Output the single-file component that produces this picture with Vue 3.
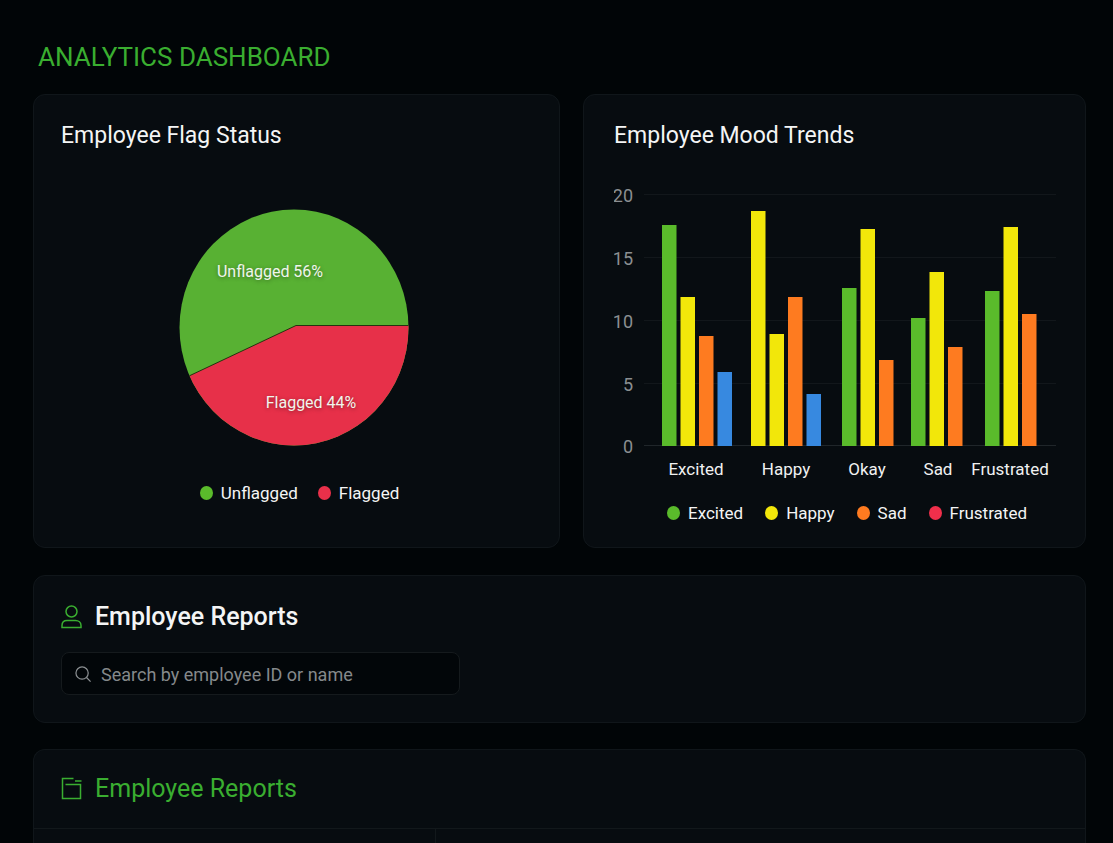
<script setup>
import { ref } from 'vue'

const query = ref('')

const GREEN = '#5abb2b'
const YELLOW = '#f2e70a'
const ORANGE = '#fe7b20'
const BLUE = '#3789e0'
const RED = '#e9304a'

const flagLegend = [
  { label: 'Unflagged', color: GREEN },
  { label: 'Flagged', color: RED },
]

const moodLegend = [
  { label: 'Excited', color: GREEN },
  { label: 'Happy', color: YELLOW },
  { label: 'Sad', color: ORANGE },
  { label: 'Frustrated', color: '#f02f4b' },
]

const baseline = 266
const ticks = [
  { value: 20, y: 15 },
  { value: 15, y: 78 },
  { value: 10, y: 141 },
  { value: 5, y: 204 },
  { value: 0, y: 266 },
]

const groups = [
  { label: 'Excited', x: 49, center: 83, bars: [[221, GREEN], [149, YELLOW], [110, ORANGE], [74, BLUE]] },
  { label: 'Happy', x: 138, center: 173, bars: [[235, YELLOW], [112, YELLOW], [149, ORANGE], [52, BLUE]] },
  { label: 'Okay', x: 229, center: 254, bars: [[158, GREEN], [217, YELLOW], [86, ORANGE]] },
  { label: 'Sad', x: 298, center: 325, bars: [[128, GREEN], [174, YELLOW], [99, ORANGE]] },
  { label: 'Frustrated', x: 372, center: 397, bars: [[155, GREEN], [219, YELLOW], [132, ORANGE]] },
]
const barStep = 18.5
</script>

<template>
  <main class="page">
    <h1 class="page-title">ANALYTICS DASHBOARD</h1>

    <div class="charts">
      <section class="card chart-card">
        <h2 class="card-title">Employee Flag Status</h2>
        <svg class="pie" viewBox="0 0 471 321" role="img" aria-label="Unflagged 56%, Flagged 44%">
          <clipPath id="pie-outline">
            <ellipse cx="233" cy="167.500" rx="114.500" ry="118" />
          </clipPath>
          <g clip-path="url(#pie-outline)">
            <rect x="110" y="40" width="250" height="250" fill="#58b133" />
            <path d="M235 165.500H360V300H110V224.500Z" fill="#e73049" />
            <path d="M360 165.500H235L110 224.500" fill="none" stroke="#26330f" stroke-width="1" />
          </g>
          <text class="slice-label" x="209" y="117">Unflagged 56%</text>
          <text class="slice-label" x="250" y="248">Flagged 44%</text>
        </svg>
        <ul class="legend flag-legend">
          <li v-for="item in flagLegend" :key="item.label">
            <span class="dot" :style="{ background: item.color }"></span>{{ item.label }}
          </li>
        </ul>
      </section>

      <section class="card chart-card mood-card">
        <h2 class="card-title">Employee Mood Trends</h2>
        <svg class="bars" viewBox="1 0 442 312" role="img" aria-label="Employee mood trends by category">
          <g v-for="tick in ticks" :key="tick.value">
            <rect x="31" :y="tick.y - 1" width="412" height="1" :fill="tick.value ? '#12171b' : '#20262a'" />
            <text class="tick-label" x="20" :y="tick.y + 7">{{ tick.value }}</text>
          </g>
          <g v-for="group in groups" :key="group.label">
            <rect
              v-for="([height, color], i) in group.bars"
              :key="i"
              :x="group.x + i * barStep"
              :y="baseline - height"
              width="14.500"
              :height="height"
              :fill="color"
            />
            <text class="group-label" :x="group.center" y="295">{{ group.label }}</text>
          </g>
        </svg>
        <ul class="legend mood-legend">
          <li v-for="item in moodLegend" :key="item.label">
            <span class="dot" :style="{ background: item.color }"></span>{{ item.label }}
          </li>
        </ul>
      </section>
    </div>

    <section class="card search-card">
      <h2 class="section-title strong">
        <svg class="icon" viewBox="0 0 22 24" aria-hidden="true">
          <circle cx="10.500" cy="6.500" r="5.500" />
          <path d="M1 22.500V20.500C1 17.500 3 15.500 6 15.500H14.500C17.500 15.500 20 17.500 20 20.500V22.500Z" />
        </svg>
        Employee Reports
      </h2>
      <label class="search">
        <svg class="search-icon" viewBox="0 0 18 18" aria-hidden="true">
          <circle cx="7.500" cy="7.500" r="6.500" />
          <path d="M12.200 12.200L16.500 16.500" />
        </svg>
        <input v-model="query" type="text" placeholder="Search by employee ID or name" aria-label="Search by employee ID or name" />
      </label>
    </section>

    <section class="card table-card">
      <h2 class="section-title green">
        <svg class="icon" viewBox="0 0 22 24" aria-hidden="true">
          <path d="M12.500 1.500H1.500V21.500H19.500V7.500H4.500M14 4H20.500" />
        </svg>
        Employee Reports
      </h2>
      <div class="report-grid">
        <div class="report-cell"></div>
        <div class="report-cell"></div>
      </div>
    </section>
  </main>
</template>

<style>
body {
  margin: 0;
  background: #010507;
}
</style>

<style scoped>
.page {
  box-sizing: border-box;
  display: flex;
  flex-direction: column;
  min-height: 100vh;
  padding: 40px 27px 0 33px;
  background: #010507;
  color: #f4f5f5;
  font-family: Roboto, "Liberation Sans", sans-serif;
}

h1,
h2,
ul {
  margin: 0;
  padding: 0;
  font-weight: 400;
}

.page-title {
  padding-left: 5px;
  margin-bottom: 20px;
  font-size: 26px;
  line-height: 34px;
  color: #3aae30;
}

.charts {
  display: grid;
  grid-template-columns: 527fr 503fr;
  gap: 23px;
  margin-bottom: 27px;
}

.card {
  box-sizing: border-box;
  border: 1px solid #10161a;
  border-radius: 12px;
  background: #070c10;
}

.chart-card {
  display: flex;
  flex-direction: column;
  padding: 25px 27px 24px;
}

.mood-card {
  padding: 25px 29px 22px 30px;
}

.card-title {
  font-size: 23px;
  line-height: 32px;
}

.pie {
  display: block;
  width: 100%;
  margin-top: 8px;
}

.bars {
  display: block;
  width: 100%;
  margin-top: 28px;
}

.slice-label {
  font-size: 16px;
  fill: #f0f5ec;
  text-anchor: middle;
  text-shadow: 0 1px 4px rgba(0, 0, 0, 0.4);
}

.tick-label {
  font-size: 18px;
  fill: #8b8f92;
  text-anchor: end;
}

.group-label {
  font-size: 17px;
  fill: #f0f1f1;
  text-anchor: middle;
}

.legend {
  display: flex;
  justify-content: center;
  list-style: none;
  font-size: 17px;
  line-height: 24px;
}

.legend li {
  display: flex;
  align-items: center;
  gap: 8px;
}

.flag-legend {
  gap: 20px;
  margin-top: auto;
  margin-bottom: 18px;
  padding-left: 6px;
}

.mood-legend {
  gap: 22px;
  margin-top: auto;
  padding-left: 24px;
}

.dot {
  width: 13px;
  height: 14px;
  border-radius: 50%;
}

.section-title {
  display: flex;
  align-items: center;
  gap: 12px;
  font-size: 25px;
  line-height: 32px;
}

.strong {
  font-weight: 500;
}

.icon {
  width: 22px;
  height: 24px;
  fill: none;
  stroke: #3aae30;
  stroke-width: 1.5;
}

.search-card {
  padding: 25px 27px 27px;
  margin-bottom: 26px;
}

.search {
  box-sizing: border-box;
  display: flex;
  align-items: center;
  gap: 9px;
  width: 100%;
  max-width: 399px;
  height: 43px;
  margin-top: 19px;
  padding: 2px 13px 0;
  border: 1px solid #151a1d;
  border-radius: 8px;
  background: #020609;
}

.search-icon {
  flex: none;
  width: 17px;
  height: 17px;
  fill: none;
  stroke: #8b8f92;
  stroke-width: 1.3;
}

.search input {
  flex: 1;
  min-width: 0;
  padding: 0;
  border: 0;
  outline: 0;
  background: transparent;
  color: #f4f5f5;
  font: inherit;
  font-size: 18px;
}

.search input::placeholder {
  color: #85898b;
  opacity: 1;
}

.table-card {
  display: flex;
  flex: 1;
  flex-direction: column;
  padding-top: 23px;
  border-bottom: 0;
  border-radius: 12px 12px 0 0;
}

.table-card .section-title {
  padding: 0 27px 23px;
}

.green {
  color: #3aae30;
}

.report-grid {
  display: grid;
  flex: 1;
  grid-template-columns: 401fr 650fr;
  min-height: 14px;
  border-top: 1px solid #12181b;
}

.report-cell + .report-cell {
  border-left: 1px solid #12181b;
}
</style>
